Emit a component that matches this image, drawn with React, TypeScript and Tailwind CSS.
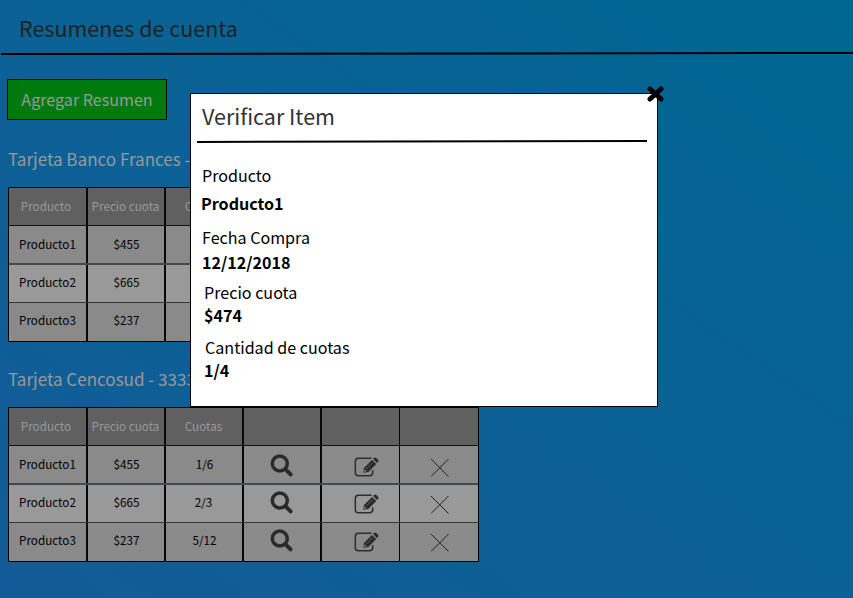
import React from "react";

type Row = { name: string; price: string; fee: string };

const rows: Row[] = [
  { name: "Producto1", price: "$455", fee: "1/6" },
  { name: "Producto2", price: "$665", fee: "2/3" },
  { name: "Producto3", price: "$237", fee: "5/12" },
];

function SearchIcon() {
  return (
    <svg width="24" height="24" viewBox="0 0 24 24" fill="none" stroke="#2a2a2a">
      <circle cx="9.8" cy="9.5" r="7.5" strokeWidth="3.5" />
      <path d="M15.6 15.3 L20.6 20.3" strokeWidth="4" strokeLinecap="round" />
    </svg>
  );
}

function EditIcon() {
  return (
    <svg width="25" height="20" viewBox="0 0 75 60" fill="none">
      <path d="M51 4H13Q4 4 4 14V47Q4 56 13 56H46Q56 56 56 47V41" stroke="#2e2e2e" strokeWidth="4.5" strokeLinecap="round" />
      <path d="M28 47L30 33L54 9L67 21L43 45Z" fill="#2a2a2a" />
      <path d="M57 6L61 2Q64 0 67 3L73 9Q75 12 72 15L69 18Z" fill="#2a2a2a" />
      <path d="M37 36L56 17" stroke="#777" strokeWidth="2" />
      <circle cx="33.5" cy="41" r="3" fill="#888" />
    </svg>
  );
}

function CrossIcon() {
  return (
    <svg width="18" height="18" viewBox="0 0 18 18" stroke="#222" strokeWidth="1">
      <path d="M0 0 17.5 17.5M17.5 0 0 17.5" />
    </svg>
  );
}

const columns = "grid grid-cols-[79px_78px_78px_78px_78px_78px]";
const cell = "flex items-start justify-center border-r-2 border-[#080808] whitespace-nowrap";

function ItemsTable() {
  return (
    <div className="w-[471px] border border-black text-[11.7px] leading-5 text-black">
      <div className={`${columns} h-[38px] border-b border-[#101214] bg-[#606060] text-[#999]`}>
        <div className={`${cell} pt-2 pr-[3px]`}>Producto</div>
        <div className={`${cell} pt-2 pr-px`}>Precio cuota</div>
        <div className={`${cell} pt-2 pr-px`}>Cuotas</div>
        <div className={cell} />
        <div className="border-r border-[#080808]" />
        <div />
      </div>
      {rows.map((r, i) => (
        <div
          key={r.name}
          className={`${columns} ${
            i === 0
              ? "h-[39px] border-b-2 border-b-[#45494c] bg-[#8a8a8a]"
              : i === 1
                ? "h-[38px] border-b border-b-[#363636] bg-[#999]"
                : "h-[38px] bg-[#8a8a8a]"
          }`}
        >
          <div className={`${cell} ${i === 0 ? "pt-2" : "pt-[7px]"}`}>{r.name}</div>
          <div className={`${cell} pl-px ${i === 0 ? "pt-2" : "pt-[7px]"}`}>{r.price}</div>
          <div className={`${cell} ${i === 0 ? "pt-2 pl-px" : i === 1 ? "pt-[7px] pr-px" : "pt-[7px] pl-px"}`}>{r.fee}</div>
          <div className={`${cell} ${i === 0 ? "pt-2" : "pt-1.5"}`}>
            <SearchIcon />
          </div>
          <div className={`flex items-start justify-center border-r border-[#080808] pl-3 ${i === 0 ? "pt-[11px]" : "pt-[9px]"}`}>
            <EditIcon />
          </div>
          <div className={`flex items-start justify-center pl-px ${i === 0 ? "pt-[13px]" : "pt-[11px]"}`}>
            <CrossIcon />
          </div>
        </div>
      ))}
    </div>
  );
}

function Modal() {
  return (
    <div className="absolute top-[93px] left-[190px] h-[314px] w-[468px] border border-black bg-white text-[16.1px] leading-[22px] text-black">
      <svg className="absolute -top-2 -right-[7px]" width="17" height="16" viewBox="0 0 17 16" stroke="#000" strokeWidth="5" strokeLinecap="round">
        <path d="M3 3 14 13M14 3 3 13" />
      </svg>
      <h2 className="mt-[7px] ml-[11px] text-[21.5px] leading-[30px] text-[#333]">Verificar Item</h2>
      <svg className="mt-[9px] ml-1.5 block" width="450" height="3" viewBox="0 0 450 3" stroke="#000" strokeWidth="2">
        <path d="M0 2 450 1" />
      </svg>
      <dl>
        <dt className="mt-[21px] ml-[11px]">Producto</dt>
        <dd className="mt-1.5 ml-2.5 font-bold">Producto1</dd>
        <dt className="mt-3 ml-[11px]">Fecha Compra</dt>
        <dd className="mt-[3px] ml-[11px] font-bold">12/12/2018</dd>
        <dt className="mt-2 ml-[13px]">Precio cuota</dt>
        <dd className="mt-px ml-[13px] font-bold">$474</dd>
        <dt className="mt-2.5 ml-3.5">Cantidad de cuotas</dt>
        <dd className="mt-px ml-[13px] font-bold">1/4</dd>
      </dl>
    </div>
  );
}

export default function App() {
  return (
    <div className="relative h-[598px] w-[853px] overflow-hidden bg-gradient-to-tr from-[#135b98] to-[#006792] font-['Noto_Sans_CJK_SC','Noto_Sans',sans-serif]">
      <h1 className="pt-3 pl-[19px] text-[21.5px] leading-[32px] text-[#222]">Resumenes de cuenta</h1>
      <svg className="mt-2 block" width="853" height="3" viewBox="0 0 853 3" stroke="#000" strokeWidth="2">
        <path d="M1 2 853 1" />
      </svg>
      <main className="pl-2">
        <button className="mt-6 -ml-px block h-[41px] w-40 border border-black bg-[#007a0c] text-[16.1px] leading-[37px] text-[#999]">
          Agregar Resumen
        </button>
        <h2 className="mt-[27px] h-6 text-[17.05px] leading-6 text-[#999]">Tarjeta Banco Frances -</h2>
        <div className="mt-4">
          <ItemsTable />
        </div>
        <h2 className="mt-[25px] h-6 text-[17.05px] leading-6 text-[#999]">Tarjeta Cencosud - 3333</h2>
        <div className="mt-4">
          <ItemsTable />
        </div>
      </main>
      <Modal />
    </div>
  );
}
